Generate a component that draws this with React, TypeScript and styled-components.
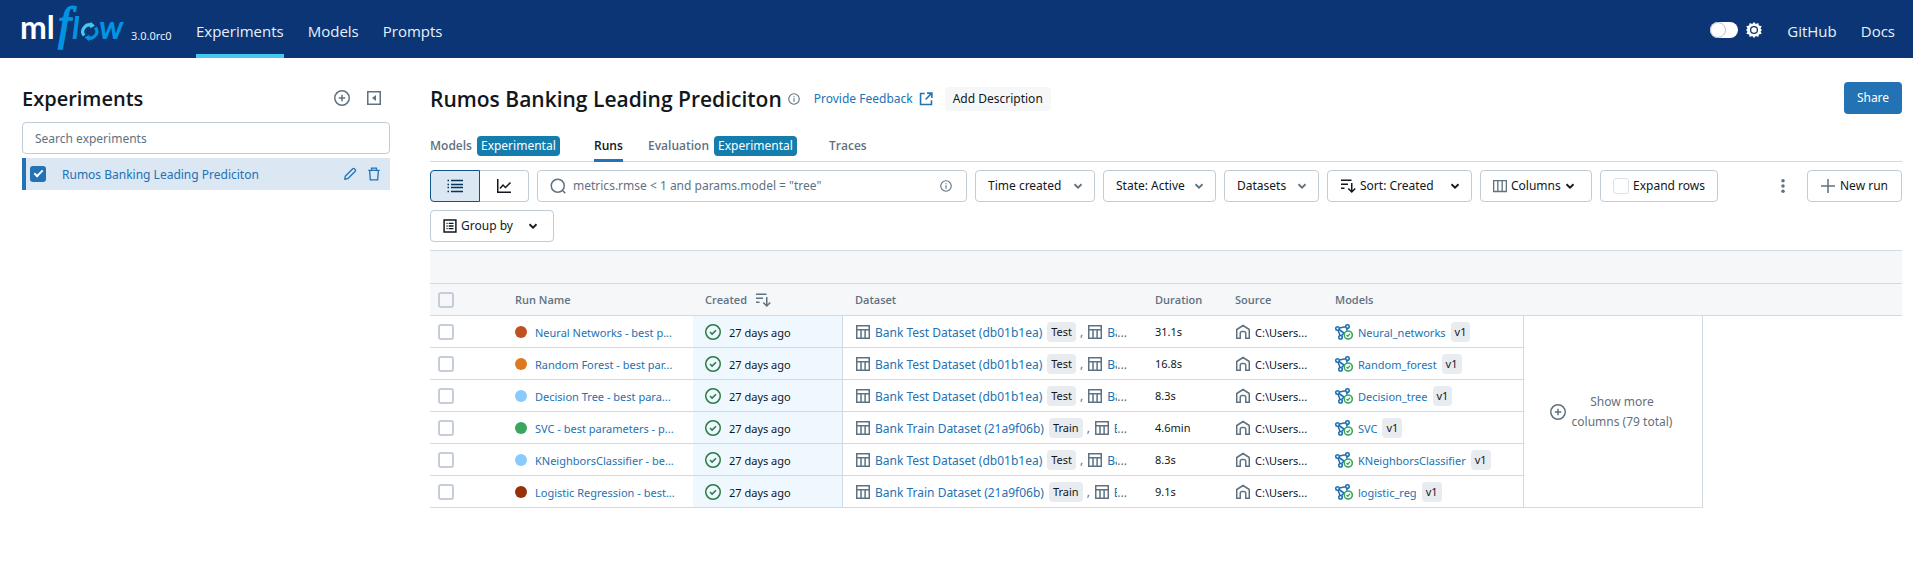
import React from "react";
import styled, { createGlobalStyle, css } from "styled-components";

const color = {
  navy: "#0b3574",
  text: "#11171c",
  muted: "#5f7281",
  link: "#2272b4",
  border: "#d1d9e1",
  control: "#c0cdd8",
  band: "#f6f7f9",
  selected: "#dbe7f3",
  green: "#277c43",
  tag: "#e8ecf0",
};

const GlobalStyle = createGlobalStyle`
  *, *::before, *::after { box-sizing: border-box; }
  body {
    margin: 0;
    background: #fff;
    color: ${color.text};
    font-family: "Noto Sans", "Open Sans", sans-serif;
    font-size: 12px;
    line-height: 20px;
  }
  button, input, select { font: inherit; color: inherit; }
  button { cursor: pointer; }
  a { color: ${color.link}; text-decoration: none; }
  h1, h2 { margin: 0; font-family: "Open Sans", sans-serif; font-weight: 600; }
  svg { display: block; flex: none; }
`;

/* ---------- icons ---------- */

type IconProps = { size?: number; tint?: string; children?: React.ReactNode };

const Icon = ({ size = 16, tint = "currentColor", children }: IconProps) => (
  <svg width={size} height={size} viewBox="0 0 16 16" fill="none" stroke={tint} strokeWidth={1.5} aria-hidden="true">
    {children}
  </svg>
);

const PlusCircle = (p: IconProps) => (
  <Icon {...p}>
    <circle cx="8" cy="8" r="7.25" />
    <path d="M8 4.75v6.5M4.75 8h6.5" />
  </Icon>
);
const CollapsePanel = (p: IconProps) => (
  <Icon {...p}>
    <rect x="1.75" y="1.75" width="12.5" height="12.5" />
    <path d="M10 5v6L6 8z" fill="currentColor" stroke="none" />
  </Icon>
);
const Pencil = (p: IconProps) => (
  <Icon {...p}>
    <path d="M2 14l.6-3.4 8.6-8.6a1.3 1.3 0 0 1 1.8 0l1 1a1.3 1.3 0 0 1 0 1.8L5.4 13.4z" strokeLinejoin="round" />
  </Icon>
);
const Trash = (p: IconProps) => (
  <Icon {...p}>
    <path d="M1.5 3.75h13M5.25 3.5V1.25h5.5V3.5M3 4l.8 10.75h8.4L13 4" />
  </Icon>
);
const Info = (p: IconProps) => (
  <Icon {...p}>
    <circle cx="8" cy="8" r="7" />
    <path d="M8 7v4.5M8 4.25v1.5" />
  </Icon>
);
const NewWindow = (p: IconProps) => (
  <Icon {...p}>
    <path d="M6.5 1.75H1.75v12.5h12.5V9.5M9.25 1.25h5.5v5.5M14.5 1.5L7.5 8.5" strokeWidth="1.8" />
  </Icon>
);
const ListIcon = (p: IconProps) => (
  <Icon {...p}>
    <path d="M4 2.5h12M4 6.5h12M4 9.5h12M4 13.5h12" strokeWidth="1.4" />
    <path d="M.5 2.5h1.5M.5 6.5h1.5M.5 9.5h1.5M.5 13.5h1.5" strokeWidth="1.4" />
  </Icon>
);
const ChartLine = (p: IconProps) => (
  <Icon {...p}>
    <path d="M1.75 1v13.25H15M4 10.5L7 7l2.5 2.5L14.5 4.5" />
  </Icon>
);
const SearchIcon = (p: IconProps) => (
  <Icon {...p}>
    <circle cx="7.75" cy="7.75" r="6.5" />
    <path d="M12.3 12.3l3 3" />
  </Icon>
);
const Chevron = ({ tint = "currentColor" }: IconProps) => (
  <svg width="10" height="10" viewBox="3 3 10 10" fill="none" stroke={tint} strokeWidth="1.8" aria-hidden="true">
    <path d="M4.5 6.25L8 9.75l3.5-3.5" />
  </svg>
);
const SortDesc = (p: IconProps) => (
  <Icon {...p}>
    <path d="M1 2.25h10.5M1 6.25h7M1 10.25h3.5M11.75 5v8.75M8.25 10.5l3.5 3.5 3.5-3.5" />
  </Icon>
);
const ColumnsIcon = (p: IconProps) => (
  <Icon {...p}>
    <path d="M.75 1.75h14.5v12.5H.75zM5.5 1.75v12.5M10.5 1.75v12.5" />
  </Icon>
);
const GroupIcon = (p: IconProps) => (
  <Icon {...p}>
    <path d="M1.25 1.25h13.5v13.5H1.25zM6.5 5H12M6.5 8H12M6.5 11H12M4 5h1.25M4 8h1.25M4 11h1.25" strokeWidth="1.7" />
  </Icon>
);
const Plus = (p: IconProps) => (
  <Icon {...p}>
    <path d="M8 1v14M1 8h14" />
  </Icon>
);
const Overflow = (p: IconProps) => (
  <Icon {...p}>
    <g fill="currentColor" stroke="none">
      <circle cx="8" cy="2.75" r="1.75" />
      <circle cx="8" cy="8" r="1.75" />
      <circle cx="8" cy="13.25" r="1.75" />
    </g>
  </Icon>
);
const TableIcon = (p: IconProps) => (
  <Icon {...p}>
    <path d="M1.75 1.75h12.5v12.5H1.75zM1.75 5.75h12.5M6 5.75v8.5M10.1 5.75v8.5" />
  </Icon>
);
const HomeIcon = (p: IconProps) => (
  <Icon {...p}>
    <path d="M1.75 14.25V5.5L8 1.5l6.25 4v8.75h-3.5v-5a1.75 1.75 0 0 0-1.75-1.75H7a1.75 1.75 0 0 0-1.75 1.75v5z" />
  </Icon>
);
const CheckCircle = (p: IconProps) => (
  <Icon {...p}>
    <circle cx="8" cy="8" r="7.25" />
    <path d="M5 8l2.1 2.1L11 6.2" />
  </Icon>
);
const ModelVersion = () => (
  <svg width="18" height="16" viewBox="0 0 18 16" fill="none" strokeWidth="1.6" aria-hidden="true">
    <g stroke={color.link}>
      <circle cx="2.5" cy="4.5" r="1.75" />
      <circle cx="12.5" cy="2.5" r="1.75" />
      <circle cx="5.5" cy="13.25" r="1.75" />
      <path d="M4.25 4l6.5-1.25M3 6.25l2 5M4 5.5l5.5 4M12.2 4.25l-.5 2.5M6.5 11.5l3-2.5" />
    </g>
    <g stroke="#3ba65e">
      <circle cx="13.25" cy="11" r="4" fill="#fff" />
      <path d="M11.5 11l1.25 1.25 2.25-2.5" strokeWidth="1.3" />
    </g>
  </svg>
);
const Sun = () => (
  <svg width="16" height="16" viewBox="0 0 16 16" aria-hidden="true">
    <path
      d="M8 0l1.8 2.1L12.3.9l.6 2.7 2.8.7-1.2 2.3L16 8l-1.5 1.4 1.2 2.3-2.8.7-.6 2.7-2.5-1.2L8 16l-1.8-2.1-2.5 1.2-.6-2.7-2.8-.7 1.2-2.3L0 8l1.5-1.4L.3 4.3l2.8-.7.6-2.7 2.5 1.2z"
      fill="#fff"
    />
    <circle cx="8" cy="8" r="3.4" fill="#fff" stroke={color.navy} strokeWidth="1.3" />
  </svg>
);

const Logo = () => (
  <svg width="106" height="42" viewBox="0 0 106 42" overflow="visible" role="img" aria-label="mlflow">
    <text x="-2" y="32" fontFamily="Lato" fontWeight="700" fontSize="32" fill="#fff">ml</text>
    <g fill="#0194e2" fontStyle="italic">
      <text x="36" y="32" fontFamily="Liberation Serif" fontSize="46" stroke="#0194e2" strokeWidth="1.5">f</text>
      <text x="50" y="32" fontFamily="Lato" fontSize="31" fontWeight="700">l</text>
      <text x="77" y="32" fontFamily="Lato" fontSize="33" fontWeight="700">w</text>
    </g>
    <g fill="none" strokeWidth="3.2">
      <path d="M62.1 28.5a6.6 6.6 0 0 1 8-10" stroke="#43c9ed" />
      <path d="M73.4 20.5a6.6 6.6 0 0 1-8 10" stroke="#0194e2" />
    </g>
    <path d="M68.500 14.700l4.500 4-5 2.500z" fill="#43c9ed" />
    <path d="M67 34.200l-4.500-4 5-2.500z" fill="#0194e2" />
  </svg>
);

/* ---------- header ---------- */

const TopBar = styled.header`
  display: flex;
  align-items: stretch;
  height: 58px;
  padding: 0 18px 0 22px;
  background: ${color.navy};
  color: #e7f1fb;
`;
const Brand = styled.a`
  display: flex;
  align-items: flex-end;
  gap: 3px;
  width: 174px;
  padding-bottom: 9px;
`;
const Version = styled.span`
  color: #e7f1fb;
  font-size: 11px;
  padding-bottom: 3px;
`;
const NavLinks = styled.nav`
  display: flex;
  gap: 24px;
`;
const NavLink = styled.a<{ $active?: boolean }>`
  display: flex;
  align-items: center;
  padding-top: 8px;
  border-bottom: 4px solid ${(p) => (p.$active ? "#43c9ed" : "transparent")};
  color: #e7f1fb;
  font-family: "Open Sans", sans-serif;
  font-size: 15px;
`;
const ThemeSwitch = styled.label`
  display: flex;
  align-items: center;
  gap: 8px;
  margin: 2px 25px 0 auto;
`;
const Toggle = styled.input`
  appearance: none;
  width: 28px;
  height: 16px;
  margin: 0;
  border-radius: 8px;
  background: #fff;
  &::after {
    content: "";
    display: block;
    width: 16px;
    height: 16px;
    border: 1px solid #b7c3d0;
    border-radius: 50%;
  }
`;

/* ---------- shared controls ---------- */

const IconButton = styled.button`
  display: flex;
  align-items: center;
  justify-content: center;
  width: 32px;
  height: 32px;
  padding: 0;
  border: 0;
  background: none;
  color: ${color.muted};
`;
const box = css`
  height: 32px;
  border: 1px solid ${color.control};
  border-radius: 4px;
  background: #fff;
`;
const Button = styled.button<{ $width?: number }>`
  ${box}
  display: flex;
  align-items: center;
  gap: 4px;
  min-width: ${(p) => p.$width ?? 0}px;
  padding: 0 12px;
  white-space: nowrap;
`;
const Trailing = styled.span`
  margin: 0 3px 0 auto;
`;
const PrimaryButton = styled.button`
  height: 32px;
  padding: 0 12px;
  min-width: 58px;
  margin-left: auto;
  border: 0;
  border-radius: 4px;
  background: ${color.link};
  color: #fff;
`;
const Dropdown = styled.label<{ $width: number }>`
  ${box}
  display: flex;
  align-items: center;
  gap: 4px;
  width: ${(p) => p.$width}px;
  padding: 0 11px 0 12px;
`;
const Select = styled.select`
  appearance: none;
  flex: 1;
  min-width: 0;
  height: 30px;
  padding: 0;
  border: 0;
  background: none;
`;
const Checkbox = styled.input`
  appearance: none;
  display: block;
  flex: none;
  width: 16px;
  height: 16px;
  margin: 0;
  border: 2px solid #c5ced8;
  border-radius: 3px;
  background: transparent;
  &:checked {
    border-color: ${color.link};
    background: ${color.link};
  }
  &:checked::after {
    content: "";
    display: block;
    width: 5px;
    height: 9px;
    margin: 0 auto;
    border: solid #fff;
    border-width: 0 2px 2px 0;
    rotate: 45deg;
  }
`;
const LightCheckbox = styled(Checkbox)`
  border: 1px solid #dbe3ea;
`;

/* ---------- page ---------- */

const Page = styled.div`
  display: flex;
  gap: 40px;
  padding: 24px 11px 0 22px;
`;
const Sidebar = styled.aside`
  flex: none;
  width: 368px;
`;
const SideHead = styled.div`
  display: flex;
  align-items: center;
  height: 32px;
  margin-bottom: 8px;
`;
const SideTitle = styled.h2`
  flex: 1;
  padding-top: 2px;
  font-size: 20px;
  line-height: 28px;
`;
const SearchExperiments = styled.input`
  ${box}
  display: block;
  width: 100%;
  padding: 0 12px;
  &::placeholder { color: ${color.muted}; opacity: 1; }
`;
const ExperimentRow = styled.div`
  display: flex;
  align-items: center;
  height: 32px;
  margin-top: 4px;
  padding: 0 4px;
  border-left: 4px solid ${color.link};
  background: ${color.selected};
`;
const ExperimentLink = styled.a`
  flex: 1;
  padding: 1px 0 0 16px;
`;
const RowAction = styled(IconButton)`
  width: 24px;
  height: 24px;
  color: ${color.link};
`;

const Main = styled.main`
  flex: 1;
  min-width: 0;
`;
const TitleRow = styled.div`
  display: flex;
  align-items: center;
  height: 32px;
`;
const Title = styled.h1`
  padding-top: 2px;
  font-size: 21px;
  line-height: 28px;
`;
const InfoButton = styled(IconButton)`
  width: 12px;
  padding-top: 2px;
  margin: 0 14px 0 6px;
`;
const Feedback = styled.a`
  display: flex;
  align-items: center;
  gap: 6px;
  margin-right: 12px;
  padding-top: 2px;
`;
const Description = styled.button`
  height: 24px;
  margin-top: 2px;
  padding: 0 8px;
  border: 0;
  border-radius: 4px;
  background: #f6f7f9;
`;
const Tabs = styled.nav`
  display: flex;
  gap: 25px;
  height: 38px;
  margin: 10px 0 8px;
  border-bottom: 1px solid ${color.border};
`;
const Tab = styled.a<{ $active?: boolean; $width: number }>`
  display: flex;
  align-items: center;
  gap: 5px;
  min-width: ${(p) => p.$width}px;
  margin-bottom: -1px;
  padding-top: 8px;
  border-bottom: 3px solid ${(p) => (p.$active ? color.link : "transparent")};
  color: ${(p) => (p.$active ? color.text : color.muted)};
  font-family: "Open Sans", sans-serif;
  font-weight: 600;
`;
const Badge = styled.span`
  padding: 0 4px;
  border-radius: 4px;
  background: #157cae;
  color: #fff;
  font-family: "Noto Sans", sans-serif;
  font-weight: 400;
`;

const Toolbar = styled.div`
  display: flex;
  align-items: flex-start;
  gap: 8px;
`;
const Filters = styled.div`
  display: flex;
  flex: 1;
  flex-wrap: wrap;
  gap: 8px;
`;
const Segmented = styled.div`
  display: flex;
`;
const Segment = styled.button<{ $active?: boolean }>`
  ${box}
  display: flex;
  align-items: center;
  justify-content: center;
  width: 49px;
  padding: 0;
  border-radius: 0 4px 4px 0;
  border-left-width: 0;
  ${(p) =>
    p.$active &&
    css`
      width: 50px;
      border: 1px solid #0e538b;
      border-radius: 4px 0 0 4px;
      background: ${color.selected};
      color: #04355d;
    `}
`;
const SearchBox = styled.div`
  ${box}
  display: flex;
  align-items: center;
  gap: 7px;
  width: 430px;
  padding: 0 14px 0 12px;
  color: ${color.muted};
`;
const SearchInput = styled.input`
  flex: 1;
  border: 0;
  padding: 0;
  outline: 0;
  background: none;
  &::placeholder { color: ${color.muted}; opacity: 1; }
`;
const ExpandRows = styled.label`
  ${box}
  display: flex;
  align-items: center;
  gap: 4px;
  width: 118px;
  padding: 0 12px;
  white-space: nowrap;
`;

/* ---------- runs table ---------- */

const Table = styled.table`
  width: 100%;
  margin-top: 8px;
  border-top: 1px solid ${color.border};
  border-collapse: separate;
  border-spacing: 0;
  table-layout: fixed;
`;
const Band = styled.td`
  height: 33px;
  padding: 0;
  border-bottom: 1px solid ${color.border};
  background: ${color.band};
`;
const Th = styled.th`
  height: 32px;
  padding: 1px 12px 0;
  border-bottom: 1px solid ${color.border};
  background: ${color.band};
  color: ${color.muted};
  font-family: "Open Sans", sans-serif;
  font-size: 11px;
  font-weight: 600;
  text-align: left;
`;
const Td = styled.td<{ $sorted?: boolean }>`
  height: 32px;
  padding: 0 12px;
  border-bottom: 1px solid ${color.border};
  white-space: nowrap;
  overflow: hidden;
  ${(p) =>
    p.$sorted &&
    css`
      border-right: 1px solid ${color.border};
      background: #f0f8ff;
    `}
`;
const SelectTh = styled(Th)`
  padding: 0 8px;
`;
const SelectTd = styled(Td)`
  padding: 0 8px;
`;
const Line = styled.div<{ $gap?: number }>`
  display: flex;
  align-items: center;
  gap: ${(p) => p.$gap ?? 4}px;
`;
const Dot = styled.span<{ $color: string }>`
  flex: none;
  width: 12px;
  height: 12px;
  border-radius: 50%;
  background: ${(p) => p.$color};
`;
const RunLink = styled.a`
  padding-top: 2px;
  font-size: 11px;
`;
const Small = styled.span`
  padding-top: 2px;
  font-size: 11px;
`;
const Tag = styled.span`
  padding: 0 4px;
  border-radius: 4px;
  background: ${color.tag};
  font-size: 11px;
`;
const DatasetLine = styled(Line)`
  width: 272px;
  color: ${color.muted};
  ${Tag} { color: ${color.text}; }
`;
const DatasetLink = styled.a`
  padding: 3px 1px 0 0;
`;
const Rest = styled.span`
  display: flex;
  flex: 1;
  min-width: 0;
  padding-top: 3px;
`;
const Clip = styled.span`
  flex: 1;
  min-width: 0;
  overflow: hidden;
  color: ${color.link};
`;
const MoreCell = styled.td`
  padding: 0;
  border: 1px solid ${color.border};
  border-top: 0;
`;
const MoreButton = styled.button`
  display: flex;
  align-items: center;
  justify-content: center;
  gap: 6px;
  width: 100%;
  padding: 0 4px 0 0;
  border: 0;
  background: none;
  color: ${color.muted};
`;

const columns = [73, 190, 150, 300, 80, 100, 200, 180];

const test = { name: "Bank Test Dataset (db01b1ea)", tag: "Test", next: "Ba" };
const train = { name: "Bank Train Dataset (21a9f06b)", tag: "Train", next: "B" };

const runs = [
  { name: "Neural Networks - best p...", dot: "#c1501f", data: test, time: "31.1s", model: "Neural_networks" },
  { name: "Random Forest - best par...", dot: "#de7921", data: test, time: "16.8s", model: "Random_forest" },
  { name: "Decision Tree - best para...", dot: "#8acaff", data: test, time: "8.3s", model: "Decision_tree" },
  { name: "SVC - best parameters - p...", dot: "#3ba65e", data: train, time: "4.6min", model: "SVC" },
  { name: "KNeighborsClassifier - be...", dot: "#8acaff", data: test, time: "8.3s", model: "KNeighborsClassifier" },
  { name: "Logistic Regression - best...", dot: "#983109", data: train, time: "9.1s", model: "logistic_reg" },
];

const RunsTable = () => (
  <Table>
    <colgroup>
      {columns.map((w, i) => (
        <col key={i} width={w} />
      ))}
      <col />
    </colgroup>
    <thead>
      <tr>
        <Band colSpan={9} />
      </tr>
      <tr>
        <SelectTh><Checkbox type="checkbox" aria-label="Select all runs" /></SelectTh>
        <Th>Run Name</Th>
        <Th><Line $gap={8}>Created <SortDesc /></Line></Th>
        <Th>Dataset</Th>
        <Th>Duration</Th>
        <Th>Source</Th>
        <Th colSpan={3}>Models</Th>
      </tr>
    </thead>
    <tbody>
      {runs.map((run, i) => (
        <tr key={run.name}>
          <SelectTd><Checkbox type="checkbox" aria-label={`Select ${run.name}`} /></SelectTd>
          <Td><Line $gap={8}><Dot $color={run.dot} /><RunLink href="#">{run.name}</RunLink></Line></Td>
          <Td $sorted><Line $gap={8}><CheckCircle tint={color.green} /><Small>27 days ago</Small></Line></Td>
          <Td>
            <DatasetLine>
              <TableIcon />
              <DatasetLink href="#">{run.data.name}</DatasetLink>
              <Tag>{run.data.tag}</Tag>
              <span>,</span>
              <TableIcon />
              <Rest><Clip>{run.data.next}</Clip>...</Rest>
            </DatasetLine>
          </Td>
          <Td><Small>{run.time}</Small></Td>
          <Td><Line><HomeIcon tint={color.muted} /><Small>C:\Users...</Small></Line></Td>
          <Td><Line $gap={5}><ModelVersion /><RunLink href="#">{run.model}</RunLink><Tag>v1</Tag></Line></Td>
          {i === 0 && (
            <MoreCell rowSpan={runs.length}>
              <MoreButton type="button">
                <PlusCircle />
                <span>Show more<br />columns (79 total)</span>
              </MoreButton>
            </MoreCell>
          )}
        </tr>
      ))}
    </tbody>
  </Table>
);

export default function App() {
  return (
    <>
      <GlobalStyle />
      <TopBar>
        <Brand href="#"><Logo /><Version>3.0.0rc0</Version></Brand>
        <NavLinks>
          <NavLink href="#" $active>Experiments</NavLink>
          <NavLink href="#">Models</NavLink>
          <NavLink href="#">Prompts</NavLink>
        </NavLinks>
        <ThemeSwitch>
          <Toggle type="checkbox" role="switch" aria-label="Dark theme" />
          <Sun />
        </ThemeSwitch>
        <NavLinks>
          <NavLink href="#">GitHub</NavLink>
          <NavLink href="#">Docs</NavLink>
        </NavLinks>
      </TopBar>
      <Page>
        <Sidebar>
          <SideHead>
            <SideTitle>Experiments</SideTitle>
            <IconButton type="button" aria-label="Create experiment"><PlusCircle /></IconButton>
            <IconButton type="button" aria-label="Hide sidebar"><CollapsePanel /></IconButton>
          </SideHead>
          <SearchExperiments placeholder="Search experiments" aria-label="Search experiments" />
          <ExperimentRow>
            <Checkbox type="checkbox" defaultChecked aria-label="Rumos Banking Leading Prediciton" />
            <ExperimentLink href="#">Rumos Banking Leading Prediciton</ExperimentLink>
            <RowAction type="button" aria-label="Rename"><Pencil size={14} /></RowAction>
            <RowAction type="button" aria-label="Delete"><Trash size={14} /></RowAction>
          </ExperimentRow>
        </Sidebar>
        <Main>
          <TitleRow>
            <Title>Rumos Banking Leading Prediciton</Title>
            <InfoButton type="button" aria-label="Experiment info"><Info size={12} /></InfoButton>
            <Feedback href="#">Provide Feedback <NewWindow size={14} /></Feedback>
            <Description type="button">Add Description</Description>
            <PrimaryButton type="button">Share</PrimaryButton>
          </TitleRow>
          <Tabs>
            <Tab href="#" $width={139}>Models <Badge>Experimental</Badge></Tab>
            <Tab href="#" $width={29} $active>Runs</Tab>
            <Tab href="#" $width={156}>Evaluation <Badge>Experimental</Badge></Tab>
            <Tab href="#" $width={36}>Traces</Tab>
          </Tabs>
          <Toolbar>
            <Filters>
              <Segmented>
                <Segment type="button" $active aria-label="Table view"><ListIcon /></Segment>
                <Segment type="button" aria-label="Chart view"><ChartLine /></Segment>
              </Segmented>
              <SearchBox>
                <SearchIcon />
                <SearchInput placeholder={'metrics.rmse < 1 and params.model = "tree"'} aria-label="Search runs" />
                <Info size={12} />
              </SearchBox>
              <Dropdown $width={120}>
                <Select aria-label="Time created"><option>Time created</option></Select>
                <Chevron tint={color.muted} />
              </Dropdown>
              <Dropdown $width={113}>
                <Select aria-label="State"><option>State: Active</option></Select>
                <Chevron tint={color.muted} />
              </Dropdown>
              <Dropdown $width={95}>
                <Select aria-label="Datasets"><option>Datasets</option></Select>
                <Chevron tint={color.muted} />
              </Dropdown>
              <Dropdown $width={145}>
                <SortDesc />
                <Select aria-label="Sort"><option>Sort: Created</option></Select>
                <Chevron />
              </Dropdown>
              <Button type="button" $width={112}>
                <ColumnsIcon size={14} tint={color.muted} />Columns<Chevron />
              </Button>
              <ExpandRows><LightCheckbox type="checkbox" />Expand rows</ExpandRows>
              <Button type="button" $width={124}>
                <GroupIcon size={14} />Group by<Trailing><Chevron /></Trailing>
              </Button>
            </Filters>
            <IconButton type="button" aria-label="More options"><Overflow /></IconButton>
            <Button type="button" $width={95}><Plus tint={color.muted} />New run</Button>
          </Toolbar>
          <RunsTable />
        </Main>
      </Page>
    </>
  );
}
